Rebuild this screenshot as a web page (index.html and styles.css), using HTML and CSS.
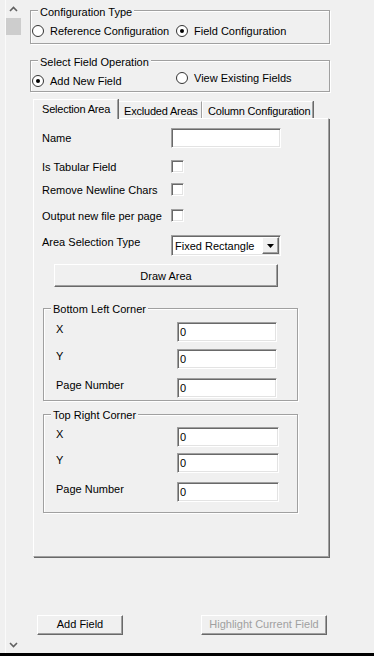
FILE: index.html
```html
<!DOCTYPE html>
<html lang="en">
  <head>
    <meta charset="UTF-8">
    <meta name="viewport" content="width=device-width, initial-scale=1.0">
    <title>Field Configuration</title>
    <link rel="stylesheet" href="styles.css">
  </head>
  <body>
    <div class="window">
      <div class="scrollbar">
        <div class="scroll-arrow">
          <svg width="9" height="6" viewBox="0 0 9 6"><polyline points="1,5 4.5,1.5 8,5" fill="none" stroke="#606060" stroke-width="1.6"/></svg>
        </div>
        <div class="scroll-thumb"></div>
        <div class="scroll-track"></div>
        <div class="scroll-arrow">
          <svg width="9" height="6" viewBox="0 0 9 6"><polyline points="1,1 4.5,4.5 8,1" fill="none" stroke="#606060" stroke-width="1.6"/></svg>
        </div>
      </div>

      <div class="main">
        <div class="group group-config">
          <div class="group-title">Configuration Type</div>
          <div class="radio-row">
            <div class="radio-item"><span class="radio"></span>Reference Configuration</div>
            <div class="radio-item"><span class="radio checked"></span>Field Configuration</div>
          </div>
        </div>

        <div class="group group-operation">
          <div class="group-title">Select Field Operation</div>
          <div class="radio-row">
            <div class="radio-item radio-low"><span class="radio checked"></span>Add New Field</div>
            <div class="radio-item"><span class="radio"></span>View Existing Fields</div>
          </div>
        </div>

        <div class="tab-control">
          <div class="tabs">
            <div class="tab tab-selected">Selection Area</div>
            <div class="tab tab-excluded">Excluded Areas</div>
            <div class="tab tab-columns">Column Configuration</div>
          </div>
          <div class="tab-page">
            <div class="field-row row-name">
              <span class="field-label">Name</span>
              <span class="sunken text-input"></span>
            </div>
            <div class="field-row row-check row-tabular">
              <span class="field-label">Is Tabular Field</span>
              <span class="sunken checkbox"></span>
            </div>
            <div class="field-row row-check row-newline">
              <span class="field-label">Remove Newline Chars</span>
              <span class="sunken checkbox"></span>
            </div>
            <div class="field-row row-check row-output">
              <span class="field-label">Output new file per page</span>
              <span class="sunken checkbox"></span>
            </div>
            <div class="field-row row-area">
              <span class="field-label">Area Selection Type</span>
              <div class="sunken combo">
                <span>Fixed Rectangle</span>
                <span class="combo-button">
                  <svg width="7" height="4" viewBox="0 0 7 4"><polygon points="0,0 7,0 3.5,4" fill="#000"/></svg>
                </span>
              </div>
            </div>
            <div class="button draw-button">Draw Area</div>

            <div class="group corner-group corner-bottom">
              <div class="group-title">Bottom Left Corner</div>
              <div class="corner-row row-first">
                <span class="corner-label">X</span>
                <span class="sunken value-input">0</span>
              </div>
              <div class="corner-row row-second">
                <span class="corner-label">Y</span>
                <span class="sunken value-input">0</span>
              </div>
              <div class="corner-row row-third">
                <span class="corner-label">Page Number</span>
                <span class="sunken value-input">0</span>
              </div>
            </div>

            <div class="group corner-group corner-top">
              <div class="group-title">Top Right Corner</div>
              <div class="corner-row row-first">
                <span class="corner-label">X</span>
                <span class="sunken value-input">0</span>
              </div>
              <div class="corner-row row-second">
                <span class="corner-label">Y</span>
                <span class="sunken value-input">0</span>
              </div>
              <div class="corner-row row-third">
                <span class="corner-label">Page Number</span>
                <span class="sunken value-input">0</span>
              </div>
            </div>
          </div>
        </div>

        <div class="actions">
          <div class="button add-button">Add Field</div>
          <div class="button highlight-button">Highlight Current Field</div>
        </div>
      </div>
    </div>
  </body>
</html>
```

FILE: styles.css
```css
* {
  box-sizing: border-box;
}

body {
  margin: 0;
  height: 656px;
  overflow: hidden;
  background-color: #f0f0f0;
  color: #000;
  font-family: "Liberation Sans", Arial, sans-serif;
  font-size: 11px;
  line-height: 14px;
}

.window {
  display: flex;
  height: 656px;
  border-bottom: 3px solid #000;
}

/* Left scrollbar */
.scrollbar {
  width: 17px;
  margin-left: 5px;
  border-left: 1px solid #fafafa;
  display: flex;
  flex-direction: column;
}

.scroll-arrow {
  width: 15px;
  height: 17px;
  display: flex;
  align-items: center;
  justify-content: center;
}

.scroll-thumb {
  width: 15px;
  height: 17px;
  margin-top: 1px;
  background-color: #cdcdcd;
}

.scroll-track {
  flex: 1;
}

.main {
  width: 300px;
  margin-left: 8px;
  display: flex;
  flex-direction: column;
}

/* Group boxes */
.group {
  border: 1px solid #a0a0a0;
  box-shadow: 1px 1px 0 #fff, inset 1px 1px 0 #fff;
  display: flex;
  flex-direction: column;
}

.group-title {
  align-self: flex-start;
  margin: -6px 0 0 7px;
  padding: 0 2px;
  background-color: #f0f0f0;
  white-space: nowrap;
}

.group-config {
  margin-top: 10px;
  height: 34px;
}

.group-operation {
  margin-top: 16px;
  height: 32px;
}

.radio-row {
  display: flex;
  align-items: flex-start;
  padding-left: 1px;
}

.group-config .radio-row {
  margin-top: 5px;
}

.group-operation .radio-row {
  margin-top: 2px;
}

.radio-item {
  display: flex;
  align-items: center;
  gap: 6px;
  height: 14px;
  white-space: nowrap;
}

.radio-item:first-child {
  width: 144px;
}

.radio-low {
  margin-top: 3px;
}

.radio {
  width: 12px;
  height: 12px;
  border: 1px solid #333;
  border-radius: 50%;
  background-color: #fff;
  display: flex;
  align-items: center;
  justify-content: center;
}

.radio.checked::after {
  content: "";
  width: 4px;
  height: 4px;
  border-radius: 50%;
  background-color: #000;
}

/* Tab control */
.tab-control {
  width: 296px;
  margin-top: 7px;
  margin-left: 3px;
}

.tabs {
  display: flex;
  align-items: flex-end;
  height: 19px;
}

.tab {
  height: 17px;
  padding: 2px 0 0 5px;
  border-top: 1px solid #fff;
  border-left: 1px solid #fff;
  border-right: 1px solid #a0a0a0;
  box-shadow: 1px 0 0 #696969;
  letter-spacing: -0.2px;
  white-space: nowrap;
}

.tab-selected {
  position: relative;
  z-index: 1;
  width: 85px;
  height: 20px;
  margin-bottom: -1px;
  padding-left: 8px;
  background-color: #f0f0f0;
}

.tab-excluded {
  width: 84px;
}

.tab-columns {
  width: 111px;
}

.tab-page {
  height: 439px;
  border-top: 1px solid #fff;
  border-left: 1px solid #fff;
  border-right: 1px solid #a0a0a0;
  border-bottom: 1px solid #a0a0a0;
  box-shadow: 1px 1px 0 #696969;
  display: flex;
  flex-direction: column;
}

/* Sunken inputs */
.sunken {
  background-color: #fff;
  border-top: 1px solid #a0a0a0;
  border-left: 1px solid #a0a0a0;
  border-right: 1px solid #fff;
  border-bottom: 1px solid #fff;
  box-shadow: inset 1px 1px 0 #696969, inset -1px -1px 0 #e3e3e3;
}

.field-row {
  display: flex;
  align-items: center;
  padding-left: 8px;
}

.field-label {
  width: 129px;
  white-space: nowrap;
}

.row-name {
  margin-top: 9px;
}

.text-input {
  width: 110px;
  height: 20px;
}

.row-check {
  height: 13px;
}

.row-tabular {
  margin-top: 12px;
}

.row-newline {
  margin-top: 10px;
}

.row-output {
  margin-top: 13px;
}

.checkbox {
  width: 13px;
  height: 13px;
}

.row-area {
  align-items: flex-start;
  margin-top: 13px;
}

.combo {
  width: 110px;
  height: 21px;
  padding-left: 3px;
  display: flex;
  align-items: center;
  justify-content: space-between;
  white-space: nowrap;
}

.combo-button {
  width: 17px;
  height: 17px;
  margin-right: 1px;
  display: flex;
  align-items: center;
  justify-content: center;
  background-color: #f0f0f0;
  border-top: 1px solid #fff;
  border-left: 1px solid #fff;
  border-right: 1px solid #696969;
  border-bottom: 1px solid #696969;
  box-shadow: inset -1px -1px 0 #a0a0a0;
}

/* Buttons */
.button {
  display: flex;
  align-items: center;
  justify-content: center;
  background-color: #f0f0f0;
  border-top: 1px solid #fff;
  border-left: 1px solid #fff;
  border-right: 1px solid #696969;
  border-bottom: 1px solid #696969;
  box-shadow: inset -1px -1px 0 #a0a0a0;
  white-space: nowrap;
}

.draw-button {
  width: 224px;
  height: 23px;
  margin: 8px 0 0 20px;
}

/* Corner groups */
.corner-group {
  width: 255px;
  margin-left: 9px;
}

.corner-group .group-title {
  margin-top: -7px;
}

.corner-bottom {
  height: 93px;
  margin-top: 21px;
}

.corner-top {
  height: 99px;
  margin-top: 13px;
}

.corner-row {
  display: flex;
  align-items: flex-start;
  padding-left: 12px;
}

.corner-label {
  width: 121px;
  white-space: nowrap;
}

.value-input {
  width: 100px;
  height: 20px;
  padding-left: 2px;
  display: flex;
  align-items: center;
}

.corner-top .value-input {
  width: 102px;
}

.corner-bottom .row-first {
  margin-top: 6px;
}

.corner-bottom .row-second {
  margin-top: 7px;
}

.corner-bottom .row-third {
  margin-top: 9px;
}

.corner-top .row-first {
  margin-top: 5px;
}

.corner-top .row-second {
  margin-top: 6px;
}

.corner-top .row-third {
  margin-top: 9px;
}

/* Bottom actions */
.actions {
  display: flex;
  gap: 78px;
  margin-top: 58px;
  padding-left: 7px;
}

.actions .button {
  height: 20px;
  padding-bottom: 3px;
}

.add-button {
  width: 86px;
}

.highlight-button {
  width: 126px;
  color: #a0a0a0;
}
```
